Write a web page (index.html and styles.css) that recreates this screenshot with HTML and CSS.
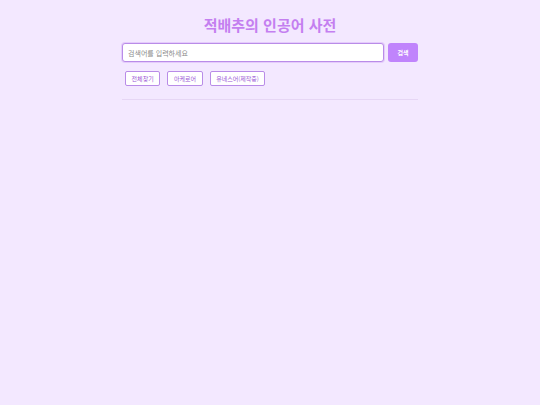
FILE: index.html
```html
<!DOCTYPE html>
<html lang="ko">
<head>
  <meta charset="UTF-8">
  <title>적배추의 인공어 사전</title>
  <link rel="stylesheet" href="styles.css">
</head>
<body>
  <div class="dict">
    <h1 class="dict-title">적배추의 인공어 사전</h1>
    <div class="search-row">
      <input class="search-input" type="text" placeholder="검색어를 입력하세요">
      <button class="search-btn">검색</button>
    </div>
    <div class="lang-row">
      <button class="lang-btn">전체찾기</button>
      <button class="lang-btn">아케로어</button>
      <button class="lang-btn">유네스어(제작중)</button>
    </div>
    <hr class="divider">
    <div id="results"></div>
  </div>
</body>
</html>
```

FILE: styles.css
```css
body {
  margin: 0;
  background: #f3e8ff;
  font-family: "Noto Sans CJK KR", "Noto Sans", sans-serif;
  height: 100vh;
}
.dict {
  width: 296px;
  margin: 0 auto;
  padding-top: 15px;
}
.dict-title {
  margin: 0 0 8px;
  text-align: center;
  font-size: 15px;
  font-weight: 700;
  line-height: 20px;
  color: #c47ff0;
}
.search-row {
  display: flex;
  gap: 4px;
}
.search-input {
  flex: 1;
  height: 19px;
  box-sizing: border-box;
  border: 1px solid #b98ce8;
  border-radius: 3px;
  padding: 0 5px;
  font-family: inherit;
  font-size: 7px;
  background: #fff;
  box-shadow: 0 0 0 1px #e5ccfb;
  outline: none;
}
.search-input::placeholder {
  color: #8a8a8a;
}
.search-btn {
  width: 30px;
  height: 19px;
  border: none;
  border-radius: 3px;
  background: #c084fc;
  color: #fff;
  font-family: inherit;
  font-size: 6px;
  font-weight: 700;
  padding: 0;
}
.lang-row {
  display: flex;
  gap: 7px;
  margin-top: 9px;
  padding-left: 3px;
}
.lang-btn {
  height: 15px;
  box-sizing: border-box;
  padding: 0 5.6px;
  border: 1px solid #b98ce8;
  border-radius: 2px;
  background: #fff;
  color: #9b59d6;
  font-family: inherit;
  font-size: 6px;
}
.divider {
  border: none;
  border-top: 1px solid #e6d6f5;
  margin: 13px 0 0;
}
```
